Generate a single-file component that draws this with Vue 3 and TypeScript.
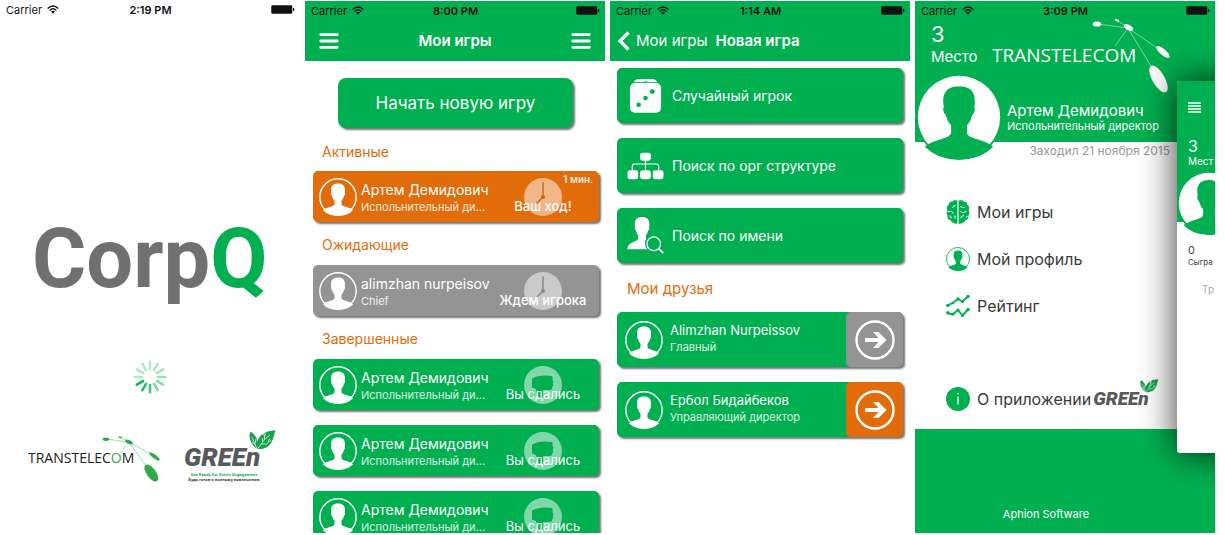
<script setup lang="ts">
interface Game {
  name: string
  role: string
  status: string
  tone: 'orange' | 'gray' | 'green'
  mark: 'clock' | 'fist'
  timer?: string
}
interface Section {
  title: string
  games: Game[]
}

const artem = 'Артем Демидович'
const director = 'Испольнительный ди...'

const finished: Game[] = Array.from({ length: 3 }, () => ({
  name: artem,
  role: director,
  status: 'Вы сдались',
  tone: 'green',
  mark: 'fist',
}))

const sections: Section[] = [
  {
    title: 'Активные',
    games: [{ name: artem, role: director, status: 'Ваш ход!', tone: 'orange', mark: 'clock', timer: '1 мин.' }],
  },
  {
    title: 'Ожидающие',
    games: [{ name: 'alimzhan nurpeisov', role: 'Chief', status: 'Ждем игрока', tone: 'gray', mark: 'clock' }],
  },
  { title: 'Завершенные', games: finished },
]

const modes = [
  { label: 'Случайный игрок', icon: 'i-dice' },
  { label: 'Поиск по орг структуре', icon: 'i-org' },
  { label: 'Поиск по имени', icon: 'i-search' },
]

const friends = [
  { name: 'Alimzhan Nurpeissov', role: 'Главный', tone: 'gray' },
  { name: 'Ербол Бидайбеков', role: 'Управляющий директор', tone: 'orange' },
]

const menu = [
  { label: 'Мои игры', icon: 'i-brain' },
  { label: 'Мой профиль', icon: 'i-profile' },
  { label: 'Рейтинг', icon: 'i-rating' },
]

const spokes = [0.3, 0.3, 0.35, 0.4, 0.45, 0.5, 0.75, 0.85, 0.95, 0.3, 0.3, 0.3]
</script>

<template>
  <main class="board">
    <svg class="defs" aria-hidden="true">
      <symbol id="i-wifi" viewBox="0 0 12 9">
        <g fill="none" stroke="currentColor" stroke-width="1.4">
          <path d="M.6 3.4Q6-1.6 11.4 3.4" />
          <path d="M2.6 5.4Q6 2.2 9.4 5.4" />
        </g>
        <path d="M4 6.6Q6 5 8 6.6L6 8.8z" fill="currentColor" />
      </symbol>
      <symbol id="i-battery" viewBox="0 0 24 9">
        <rect x=".5" y=".5" width="20.5" height="8" rx="1" fill="currentColor" stroke="currentColor" stroke-opacity=".5" />
        <path d="M22 3h1q1 1.500 0 3h-1z" fill="currentColor" />
      </symbol>
      <symbol id="i-bars" viewBox="0 0 18 15">
        <path d="M1.300 1.500h15.400M1.300 7.500h15.400M1.300 13.500h15.400" stroke="currentColor" stroke-width="2.700" stroke-linecap="round" />
      </symbol>
      <symbol id="i-lines" viewBox="0 0 13 11">
        <path d="M0 1h13M0 4h13M0 7h13M0 10h13" stroke="currentColor" stroke-width="1.600" />
      </symbol>
      <symbol id="i-bust" viewBox="0 0 38 38">
        <path
          d="M19 5.400c-4.700 0-7 2.400-7 6.400 0 1 .1 2 .3 2.800-.7.500-.1 3.100.9 3.600.4 2 1.200 3.300 2.300 4.500v3.500c-.8 2.700-8.500 2.800-11.600 6A18.600 18.600 0 0 0 19 37.400a18.600 18.600 0 0 0 15.100-5.200c-3.100-3.200-10.800-3.300-11.600-6v-3.500c1.100-1.200 1.900-2.500 2.300-4.500 1-.5 1.600-3.100.9-3.600.2-.8.3-1.800.3-2.800 0-4-2.300-6.400-7-6.400z"
          fill="currentColor"
        />
      </symbol>
      <symbol id="i-avatar" viewBox="0 0 38 38">
        <circle cx="19" cy="19" r="18.200" fill="none" stroke="currentColor" stroke-width="1.400" />
        <use href="#i-bust" width="38" height="38" />
      </symbol>
      <symbol id="i-clock" viewBox="0 0 38 38">
        <circle cx="19" cy="19" r="19" fill="#fff" fill-opacity=".5" />
        <path d="M19 5v14l-6.500 6.500" fill="none" stroke="currentColor" stroke-width="1.500" stroke-linecap="round" />
        <circle cx="19" cy="19" r="2.100" fill="currentColor" />
      </symbol>
      <symbol id="i-fist" viewBox="0 0 38 38">
        <circle cx="19" cy="19" r="19" fill="#fff" fill-opacity=".5" />
        <path
          d="M8 12.500c3-1.600 7-2.800 10-2.800 3.500-.4 7-.4 10 .4.900 1.300.9 2.700.4 3.900 1.200.9 1.200 2.900.4 3.600.8 1.400.4 3-.6 3.700.2 1.600-.7 2.600-2.200 2.700H19c-.4 2.600.7 5.500-.5 7.500-2.500 1.400-4.700-1-5-3.500l-1.500-5-4-1.500z"
          fill="currentColor"
        />
      </symbol>
      <symbol id="i-dice" viewBox="0 0 38 38">
        <path d="M7 5.600Q8 2 12 2h14q4 0 5 3.600z" fill="#fff" />
        <path d="M7 5.600h24" stroke="#00b050" stroke-width=".8" />
        <rect x="3" y="6.200" width="32" height="30.500" rx="5" fill="#fff" />
        <g fill="#00b050">
          <ellipse cx="19" cy="4.300" rx="2" ry=".5" />
          <circle cx="12" cy="28.500" r="2.300" />
          <circle cx="19" cy="21.500" r="2.300" />
          <circle cx="26" cy="15" r="2.500" />
        </g>
      </symbol>
      <symbol id="i-org" viewBox="0 0 38 38">
        <path d="M19 12v9M5.500 22v-2q0-2.500 2.500-2.500h22q2.500 0 2.500 2.500v2" fill="none" stroke="#fff" stroke-width="1.200" />
        <g fill="#fff">
          <rect x="13.500" y="6" width="11" height="8" rx="2.400" />
          <rect x=".5" y="24" width="11" height="9" rx="2.400" />
          <rect x="13.500" y="24" width="11" height="9" rx="2.400" />
          <rect x="26.500" y="24" width="11" height="9" rx="2.400" />
        </g>
        <path d="M19 20v4M5.500 20v4M32.500 20v4" stroke="#fff" stroke-width="1.200" />
      </symbol>
      <symbol id="i-search" viewBox="0 0 38 38">
        <path
          d="M15.500 0C10.500 0 8 2.500 8 7c0 1 0 2 .3 3-.8.500-.2 3.300.9 3.800.3 2 1.100 3.500 2.300 4.700v3.800C10.500 25.500.3 25.500.3 33H21a8.500 8.500 0 0 1-1.200-10.500l-.3-.5v-3.500c1.200-1.200 2-2.700 2.300-4.700 1.100-.5 1.700-3.300.9-3.800.3-1 .3-2 .3-3 0-4.500-2.500-7-7.500-7z"
          fill="#fff"
        />
        <circle cx="27.500" cy="27.500" r="7" fill="#00b050" stroke="#fff" stroke-width="1.300" />
        <path d="M32.500 32.500l4.700 4.700" stroke="#fff" stroke-width="1.800" />
      </symbol>
      <symbol id="i-arrow" viewBox="0 0 40 40">
        <circle cx="20" cy="20" r="18.500" fill="none" stroke="#fff" stroke-width="2.400" />
        <path d="M10 20h18" stroke="#fff" stroke-width="4" />
        <path d="M18 12h5.500l8 8-8 8H18l7.500-8z" fill="#fff" />
      </symbol>
      <symbol id="i-brain" viewBox="0 0 24 24">
        <path
          d="M11.400.6C9-.2 7.300.2 6.500 1.500 4 1.200 2.600 3 2.700 4.700.9 5.500.4 8 1.300 10c-1 1.700-.9 4.300.3 5.400-.6 2.400.8 4.500 2.900 4.700.9 2.400 4 4.200 6.900 3.300zM12.600.6c2.400-.8 4.100-.4 4.900.9 2.500-.3 3.900 1.500 3.800 3.200 1.800.8 2.300 3.300 1.400 5.300 1 1.700.9 4.300-.3 5.400.6 2.400-.8 4.500-2.900 4.700-.9 2.400-4 4.200-6.900 3.300z"
          fill="#00b050"
        />
        <path
          d="M9.500 5.500Q7.500 5.500 6.500 8M1.500 11.500h4q1.500.5 1.500 2M9 15.500v3M4 15.500q0 2 2 2.500M14.500 6.500Q16 8 18.500 7.500M14.500 11Q16 13.500 18 12.500l2.500-1.500M14.500 18Q15.500 15.500 18 15.500M20 17.500l1.500-1"
          fill="none"
          stroke="#fff"
          stroke-width="1"
        />
      </symbol>
      <symbol id="i-profile" viewBox="0 0 38 38">
        <g color="#00b050"><use href="#i-avatar" width="38" height="38" /></g>
      </symbol>
      <symbol id="i-rating" viewBox="0 0 24 24">
        <g fill="none" stroke="#00b050" stroke-width="1.900">
          <path d="M1.500 11.500l5-2.500 5.500-4 4.500 2.500 5.500-5M1.500 19l5 1.500 5.500-4.500 4.500 5.500 5.500-6" />
        </g>
        <g fill="#00b050">
          <circle cx="1.800" cy="11.500" r="1.700" /><circle cx="7" cy="9" r="1.300" /><circle cx="12" cy="5" r="1.700" />
          <circle cx="16.500" cy="7.500" r="1.500" /><circle cx="22" cy="2.500" r="1.700" /><circle cx="1.800" cy="18.800" r="1.700" />
          <circle cx="7" cy="20.200" r="1.400" /><circle cx="12" cy="16" r="1.500" /><circle cx="16.500" cy="21.500" r="1.500" />
          <circle cx="22" cy="15.500" r="1.700" />
        </g>
      </symbol>
      <symbol id="i-leaves" viewBox="0 0 28 20">
        <path d="M9 19C4 15-.5 8 2.500 1.500 7 4.500 10.500 9 9.500 16z" fill="#1f9e50" />
        <path d="M9.500 19C7 9 14 .5 27.500.5 25 6 25.500 20 9.500 19z" fill="#14a24a" />
        <path d="M9 19L4 7M7.500 14.500L4 12M7.500 13l.3-4M9.500 19L17 9l5-4M13 14h6l2-3M16.500 9.500V5M14.500 12V8" fill="none" stroke="#fff" stroke-width=".7" />
        <circle cx="16.500" cy="4.500" r="1.100" fill="none" stroke="#fff" stroke-width=".7" />
        <circle cx="21.500" cy="10.500" r="1" fill="none" stroke="#fff" stroke-width=".7" />
      </symbol>
    </svg>

    <section class="phone splash">
      <div class="status">
        <span class="carrier">Carrier <svg class="wifi"><use href="#i-wifi" /></svg></span>
        <time>2:19 PM</time>
        <svg class="battery"><use href="#i-battery" /></svg>
      </div>
      <h1 class="brand">Corp<span>Q</span></h1>
      <svg class="spinner" viewBox="0 0 34 34" role="img" aria-label="Загрузка">
        <line
          v-for="(o, i) in spokes"
          :key="i"
          x1="17"
          y1="1.800"
          x2="17"
          y2="9"
          stroke="#00b050"
          stroke-width="2.600"
          stroke-linecap="round"
          :stroke-opacity="o"
          :transform="`rotate(${i * 30} 17 17)`"
        />
      </svg>
      <div class="partners">
        <svg class="ttc" viewBox="0 0 134 47">
          <g stroke="#7fc98a" stroke-width=".7">
            <path d="M78 3l23 3M92 1l9 5M101 6l25 14M101 6l22 31M101 6L92 17" />
          </g>
          <g fill="#34a948">
            <ellipse cx="78" cy="3.300" rx="3.300" ry="1.700" />
            <ellipse cx="92.300" cy="1.300" rx="1.900" ry=".9" transform="rotate(15 92.300 1.300)" />
            <ellipse cx="101" cy="6" rx="4" ry="1.900" transform="rotate(22 101 6)" />
            <ellipse cx="126.500" cy="20.500" rx="6.300" ry="2" transform="rotate(37 126.500 20.500)" />
            <ellipse cx="123.300" cy="37" rx="10" ry="4.600" transform="rotate(54 123.300 37)" />
          </g>
          <text x="0" y="27" font-size="14" fill="#222">TRANSTELEC<tspan fill="#34a948">O</tspan>M</text>
        </svg>
        <div class="green-logo">
          <span class="word">GREEn</span>
          <svg class="leaves"><use href="#i-leaves" /></svg>
          <small class="motto">Get Ready for Entire Engagement</small>
          <small class="motto dark">Будь готов к полному вовлечению</small>
        </div>
      </div>
    </section>

    <section class="phone">
      <header class="top">
        <div class="status">
          <span class="carrier">Carrier <svg class="wifi"><use href="#i-wifi" /></svg></span>
          <time>8:00 PM</time>
          <svg class="battery"><use href="#i-battery" /></svg>
        </div>
        <div class="bar">
          <button class="burger" aria-label="Меню"><svg><use href="#i-bars" /></svg></button>
          <h2>Мои игры</h2>
          <button class="burger" aria-label="Список"><svg><use href="#i-bars" /></svg></button>
        </div>
      </header>
      <button class="start">Начать новую игру</button>
      <div v-for="s in sections" :key="s.title" class="group">
        <h3>{{ s.title }}</h3>
        <div class="cards">
          <button v-for="(g, i) in s.games" :key="i" class="card game" :class="g.tone">
            <svg class="avatar"><use href="#i-avatar" /></svg>
            <span class="who">
              <span class="name">{{ g.name }}</span>
              <span class="role">{{ g.role }}</span>
            </span>
            <span class="state">
              <svg class="mark" :class="g.tone"><use :href="`#i-${g.mark}`" /></svg>
              <span class="label" :class="{ strong: g.mark === 'clock' }">{{ g.status }}</span>
            </span>
            <span v-if="g.timer" class="timer">{{ g.timer }}</span>
          </button>
        </div>
      </div>
    </section>

    <section class="phone new-game">
      <header class="top">
        <div class="status">
          <span class="carrier">Carrier <svg class="wifi"><use href="#i-wifi" /></svg></span>
          <time>1:14 AM</time>
          <svg class="battery"><use href="#i-battery" /></svg>
        </div>
        <div class="bar back-bar">
          <button class="back">
            <svg viewBox="0 0 13 20"><path d="M11.500 1.500L3 10l8.500 8.500" fill="none" stroke="#fff" stroke-width="3.200" /></svg>
            Мои игры
          </button>
          <h2>Новая игра</h2>
        </div>
      </header>
      <div class="cards modes">
        <button v-for="m in modes" :key="m.label" class="card mode green">
          <svg class="mode-icon"><use :href="`#${m.icon}`" /></svg>
          {{ m.label }}
        </button>
      </div>
      <h3 class="friends-title">Мои друзья</h3>
      <div class="cards">
        <div v-for="f in friends" :key="f.name" class="card friend green">
          <svg class="avatar"><use href="#i-avatar" /></svg>
          <span class="who">
            <span class="name">{{ f.name }}</span>
            <span class="role">{{ f.role }}</span>
          </span>
          <button class="go" :class="f.tone" :aria-label="`Играть: ${f.name}`"><svg><use href="#i-arrow" /></svg></button>
        </div>
      </div>
    </section>

    <section class="phone drawer">
      <header class="profile">
        <div class="status">
          <span class="carrier">Carrier <svg class="wifi"><use href="#i-wifi" /></svg></span>
          <time>3:09 PM</time>
          <svg class="battery"><use href="#i-battery" /></svg>
        </div>
        <div class="rank-row">
          <div class="rank"><b>3</b><span>Место</span></div>
          <svg class="ttc-white" viewBox="0 0 180 76">
            <g stroke="#9fdcb8" stroke-width=".8">
              <path d="M105 6l31 4M125 2l11 8M136 10l35 24M136 10l30 50M136 10l-13 18" />
            </g>
            <g fill="#fff">
              <ellipse cx="105" cy="6" rx="4.300" ry="2.600" />
              <ellipse cx="125" cy="2.300" rx="2.300" ry="1.200" transform="rotate(20 125 2.300)" />
              <ellipse cx="136.500" cy="9.500" rx="5" ry="2.600" transform="rotate(30 136.500 9.500)" />
              <ellipse cx="171" cy="34" rx="8.500" ry="3" transform="rotate(41 171 34)" />
              <ellipse cx="166.500" cy="61" rx="15" ry="6.200" transform="rotate(60 166.500 61)" />
            </g>
            <text x="0" y="44" font-size="19" fill="#fff">TRANSTELECOM</text>
          </svg>
        </div>
        <div class="person">
          <svg class="portrait" viewBox="0 0 38 38">
            <circle cx="19" cy="19" r="19" fill="#00b050" />
            <circle cx="19" cy="19" r="18.200" fill="#fff" />
            <g color="#00b050"><use href="#i-bust" width="38" height="38" /></g>
          </svg>
          <div class="person-text">
            <strong>Артем Демидович</strong>
            <span>Испольнительный директор</span>
          </div>
        </div>
      </header>
      <p class="seen">Заходил 21 ноября 2015</p>
      <nav class="menu">
        <a v-for="m in menu" :key="m.label" href="#">
          <svg class="menu-icon"><use :href="`#${m.icon}`" /></svg>{{ m.label }}
        </a>
        <a href="#" class="about">
          <svg class="menu-icon" viewBox="0 0 24 24">
            <circle cx="12" cy="12" r="12" fill="#00b050" />
            <path d="M12 9.500v8M12 6v1.600" stroke="#fff" stroke-width="1.200" />
          </svg>
          О приложении
          <span class="green-logo small"><span class="word">GREEn</span><svg class="leaves"><use href="#i-leaves" /></svg></span>
        </a>
      </nav>
      <footer class="maker">Aphion Software</footer>

      <aside class="peek">
        <div class="peek-top">
          <button class="burger" aria-label="Открыть"><svg><use href="#i-lines" /></svg></button>
          <b>3</b>
          <span>Мест</span>
        </div>
        <svg class="peek-portrait" viewBox="0 0 38 38">
          <circle cx="19" cy="19" r="19" fill="#00b050" />
          <circle cx="19" cy="19" r="18" fill="#fff" />
          <g color="#00b050"><use href="#i-bust" width="38" height="38" /></g>
        </svg>
        <div class="peek-stats"><b>0</b><span>Сыгра</span></div>
        <p>Тр</p>
      </aside>
    </section>
  </main>
</template>

<style>
body {
  background: #fff;
}
</style>

<style scoped>
.board {
  --green: #00b050;
  --orange: #e36c0a;
  --gray: #949494;
  box-sizing: border-box;
  display: grid;
  grid-template-columns: repeat(4, minmax(0, 1fr));
  gap: 5px;
  height: 100vh;
  padding: 1px 10px 2px 0;
  font-family: Inter, Roboto, sans-serif;
  color: #fff;
}
.defs {
  position: absolute;
  width: 0;
  height: 0;
}
h1,
h2,
h3,
p {
  margin: 0;
}
button {
  border: 0;
  padding: 0;
  margin: 0;
  background: none;
  font: inherit;
  color: inherit;
  text-align: left;
}
svg {
  display: block;
  flex: none;
}
.phone {
  position: relative;
  display: flex;
  flex-direction: column;
  min-width: 0;
  min-height: 0;
  overflow: hidden;
}
.phone > * {
  flex: none;
}

/* status bar */
.status {
  display: grid;
  grid-template-columns: 1fr auto 1fr;
  align-items: center;
  height: 19px;
  padding: 0 5px 0 6px;
  font-size: 11px;
  color: #111;
}
.splash .status {
  height: 17px;
}
.status time {
  font-weight: 600;
}
.carrier {
  display: flex;
  align-items: center;
  gap: 5px;
}
.wifi {
  width: 12px;
  height: 9px;
}
.battery {
  width: 24px;
  height: 9px;
  justify-self: end;
}

/* splash */
.brand {
  margin-top: 192px;
  padding-left: 32px;
  font: 700 83px/98px Roboto, sans-serif;
  color: #70706f;
}
.brand span {
  color: var(--green);
}
.spinner {
  width: 34px;
  height: 34px;
  margin-top: 52px;
  align-self: center;
}
.partners {
  display: flex;
  gap: 22px;
  margin-top: 36px;
  padding-left: 28px;
}
.ttc {
  width: 134px;
  height: 47px;
  margin-top: 6px;
  font-family: 'Open Sans', sans-serif;
}
.green-logo {
  position: relative;
  display: flex;
  flex-direction: column;
  width: 92px;
}
.word {
  padding-top: 12px;
  font: italic 900 26px/30px Roboto, sans-serif;
  color: #58595b;
}
.leaves {
  position: absolute;
  right: 0;
  top: 0;
  width: 28px;
  height: 20px;
}
.motto {
  width: 80px;
  font: 700 4px/5px 'Noto Sans', sans-serif;
  text-align: center;
  color: var(--green);
}
.motto.dark {
  color: #333;
}

/* headers */
.top {
  background: var(--green);
}
.bar {
  display: flex;
  align-items: center;
  justify-content: space-between;
  height: 41px;
  padding: 0 14px;
}
.bar h2 {
  font-size: 15px;
  font-weight: 600;
}
.burger svg {
  width: 20px;
  height: 16px;
}
.back-bar {
  justify-content: flex-start;
  gap: 8px;
  padding: 0 7px;
}
.back {
  display: flex;
  align-items: center;
  gap: 6px;
  font-size: 15px;
}
.back svg {
  width: 13px;
  height: 20px;
}

/* cards */
.start {
  margin: 17px 32px 0 33px;
  height: 50px;
  border-radius: 8px;
  background: var(--green);
  box-shadow: 2px 2px 2px #777;
  font-size: 17px;
  text-align: center;
}
.group h3 {
  padding: 2px 0 0 17px;
  font-size: 14px;
  font-weight: 400;
  line-height: 41px;
  color: var(--orange);
}
.start + .group h3 {
  padding-top: 5px;
  line-height: 38px;
}
.cards {
  display: flex;
  flex-direction: column;
  gap: 15px;
  padding: 0 6px 0 8px;
}
.card {
  position: relative;
  display: flex;
  align-items: center;
  border-radius: 5px;
  box-shadow: 2px 2px 2px #777;
}
.green {
  background: var(--green);
}
.orange {
  background: var(--orange);
}
.gray {
  background: var(--gray);
}
.game {
  height: 51px;
  padding: 0 37px 0 6px;
}
.avatar {
  width: 38px;
  height: 38px;
}
.who {
  display: flex;
  flex: 1;
  flex-direction: column;
  min-width: 0;
  margin-left: 4px;
  padding-top: 2px;
  white-space: nowrap;
}
.name {
  font-size: 14px;
  line-height: 19px;
}
.role {
  font-size: 11px;
  line-height: 16px;
  opacity: 0.85;
}
.state {
  display: flex;
  align-items: center;
  justify-content: center;
  width: 38px;
  height: 38px;
}
.mark {
  width: 38px;
  height: 38px;
  background: none;
}
.mark.green {
  color: var(--green);
}
.mark.orange {
  color: #c4692a;
}
.mark.gray {
  color: #8a8a8a;
}
.label {
  position: absolute;
  right: 0;
  bottom: 7px;
  width: 112px;
  font-size: 13px;
  line-height: 18px;
  text-align: center;
}
.label.strong {
  font-weight: 500;
}
.timer {
  position: absolute;
  right: 6px;
  top: 1px;
  font-size: 10px;
  font-weight: 500;
  line-height: 14px;
}

/* new game */
.new-game .cards {
  padding: 0 7px;
}
.new-game .modes {
  padding-top: 7px;
}
.mode,
.friend {
  height: 55px;
}
.mode {
  gap: 8px;
  padding-left: 10px;
  font-size: 14px;
}
.mode-icon {
  width: 37px;
  height: 37px;
}
.friends-title {
  padding: 2px 0 0 17px;
  font-size: 15px;
  font-weight: 400;
  line-height: 47px;
  color: var(--orange);
}
.friend {
  padding-left: 8px;
}
.friend .who {
  margin-left: 7px;
  padding: 0 0 4px;
}
.friend .name {
  font-size: 13px;
  line-height: 18px;
}
.go {
  display: flex;
  align-items: center;
  justify-content: center;
  width: 57px;
  height: 55px;
  border-radius: 5px;
}
.go svg {
  width: 40px;
  height: 40px;
}

/* drawer */
.profile {
  height: 141px;
  background: var(--green);
}
.rank-row {
  display: flex;
  height: 54px;
  padding-left: 16px;
}
.rank {
  display: flex;
  flex-direction: column;
  width: 61px;
  padding-top: 1px;
  font-size: 15px;
  line-height: 18px;
}
.rank b {
  font-size: 22px;
  font-weight: 400;
  line-height: 27px;
}
.ttc-white {
  width: 180px;
  height: 76px;
  margin-top: -2px;
  font-family: 'Open Sans', sans-serif;
}
.person {
  display: flex;
  padding-left: 1px;
}
.portrait {
  width: 86px;
  height: 86px;
}
.person-text {
  display: flex;
  flex-direction: column;
  margin: 28px 0 0 5px;
  font-size: 11px;
  line-height: 13px;
}
.person-text strong {
  font-size: 15px;
  font-weight: 400;
  line-height: 18px;
}
.seen {
  padding: 0 45px 0 0;
  font-size: 12px;
  line-height: 18px;
  text-align: right;
  color: #999;
}
.menu {
  display: flex;
  flex: 1;
  flex-direction: column;
  padding: 28px 0 0 31px;
}
.menu a {
  display: flex;
  align-items: center;
  gap: 7px;
  height: 47px;
  font-size: 16px;
  color: #3a3a3a;
  text-decoration: none;
}
.menu-icon {
  width: 24px;
  height: 24px;
}
.menu .about {
  gap: 7px;
  height: 24px;
  margin-top: 58px;
}
.green-logo.small {
  width: 66px;
  margin-left: -5px;
}
.small .word {
  padding: 0;
  font-size: 19px;
  line-height: 22px;
}
.small .leaves {
  top: -9px;
  width: 20px;
  height: 14px;
}
.maker {
  box-sizing: border-box;
  height: 104px;
  padding: 77px 38px 0 0;
  background: var(--green);
  font-size: 11px;
  line-height: 16px;
  text-align: center;
}

/* next screen sliding over the drawer */
.peek {
  position: absolute;
  left: calc(100% - 38px);
  top: 80px;
  width: 300px;
  height: 372px;
  border-radius: 3px;
  background: #fff;
  box-shadow: 0 0 36px rgba(0, 0, 0, 0.8);
  font-size: 10px;
  line-height: 12px;
  color: #444;
}
.peek-top {
  display: flex;
  flex-direction: column;
  box-sizing: border-box;
  height: 141px;
  padding: 21px 11px 0;
  border-radius: 3px 3px 0 0;
  background: var(--green);
  color: #fff;
}
.peek-top .burger {
  height: 11px;
}
.peek-top .burger svg {
  width: 13px;
  height: 11px;
}
.peek-top b {
  margin-top: 24px;
  font-size: 16px;
  font-weight: 400;
  line-height: 18px;
}
.peek-portrait {
  width: 64px;
  height: 64px;
  margin-top: -51px;
}
.peek-stats {
  display: flex;
  flex-direction: column;
  padding: 9px 11px 0;
  font-size: 8px;
}
.peek-stats b {
  font-size: 11px;
  font-weight: 400;
}
.peek p {
  padding: 15px 0 0 25px;
  font-size: 10px;
  color: #aaa;
}
</style>
